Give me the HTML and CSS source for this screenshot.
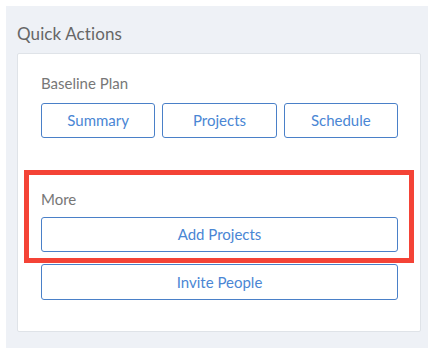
FILE: index.html
```html
<!DOCTYPE html>
<html lang="en">

<head>
  <meta charset="UTF-8">
  <meta name="viewport" content="width=device-width, initial-scale=1.0">
  <title>Quick Actions</title>
  <link rel="stylesheet" href="styles.css">
</head>

<body>
  <div class="panel">
    <h2 class="panel-title">Quick Actions</h2>

    <div class="card">
      <div class="section">
        <div class="section-label">Baseline Plan</div>
        <div class="button-row">
          <button class="action">Summary</button>
          <button class="action">Projects</button>
          <button class="action">Schedule</button>
        </div>
      </div>

      <!-- highlighted block -->
      <div class="section more highlighted">
        <div class="section-label">More</div>
        <button class="action wide">Add Projects</button>
      </div>

      <button class="action wide invite">Invite People</button>
    </div>
  </div>
</body>

</html>
```

FILE: styles.css
```css
body {
  margin: 0;
  background: #fff;
  font-family: Lato, 'Open Sans', sans-serif;
}

.panel {
  margin: 6px;
  width: 422px;
  height: 342px;
  box-sizing: border-box;
  padding: 18px 7px 0 11px;
  background: #eef1f6;
}

.panel-title {
  margin: 0 0 9px;
  font-size: 17px;
  line-height: 20px;
  font-weight: normal;
  color: #666;
  letter-spacing: 0.1px;
}

.card {
  background: #fff;
  border: 1px solid #dfe3e8;
  border-radius: 2px;
  height: 279px;
  box-sizing: border-box;
  padding: 20px 22px 0 23px;
}

.section-label {
  font-size: 15px;
  line-height: 18px;
  color: #777;
  margin-bottom: 11px;
}

.button-row {
  display: flex;
  gap: 7px;
}

.action {
  height: 35px;
  padding: 0 0 1px;
  background: #fff;
  border: 1px solid #4a80c8;
  border-radius: 3px;
  color: #4a86d4;
  font-family: inherit;
  font-size: 15px;
  cursor: pointer;
}

.button-row .action {
  flex: 1;
}

.wide {
  display: block;
  width: 100%;
}

.more {
  margin-top: 52px;
}

.more .section-label {
  margin-bottom: 9px;
}

.highlighted {
  position: relative;
}

.highlighted::after {
  content: '';
  position: absolute;
  top: -20px;
  left: -17px;
  right: -16px;
  bottom: -11px;
  border: 5px solid #f44336;
  pointer-events: none;
}

.invite {
  margin-top: 12px;
  height: 36px;
}
```
